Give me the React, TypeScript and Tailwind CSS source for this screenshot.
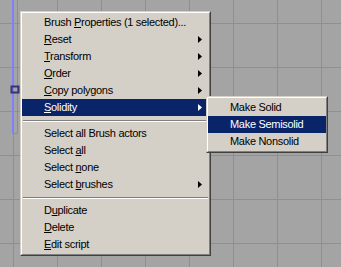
import React from 'react';

type Item =
    | { sep: true }
    | { sep?: false; label: string; key?: number; sub?: boolean; active?: boolean };

const mainItems: Item[] = [
    { label: 'Brush Properties (1 selected)...', key: 6 },
    { label: 'Reset', key: 0, sub: true },
    { label: 'Transform', key: 0, sub: true },
    { label: 'Order', key: 0, sub: true },
    { label: 'Copy polygons', key: 0, sub: true },
    { label: 'Solidity', key: 0, sub: true, active: true },
    { sep: true },
    { label: 'Select all Brush actors' },
    { label: 'Select all', key: 7 },
    { label: 'Select none', key: 7 },
    { label: 'Select brushes', key: 7, sub: true },
    { sep: true },
    { label: 'Duplicate', key: 1 },
    { label: 'Delete', key: 0 },
    { label: 'Edit script', key: 0 },
];

const subItems: Item[] = [
    { label: 'Make Solid' },
    { label: 'Make Semisolid', active: true },
    { label: 'Make Nonsolid' },
];

const Label: React.FC<{ text: string; k?: number }> = ({ text, k }) => {
    if (k === undefined) return <span>{text}</span>;
    return (
        <span>
            {text.slice(0, k)}
            <span className="underline underline-offset-[1px] decoration-1">{text[k]}</span>
            {text.slice(k + 1)}
        </span>
    );
};

const Arrow: React.FC<{ white?: boolean }> = ({ white }) => (
    <svg width="4" height="7" viewBox="0 0 4 7" className="absolute right-[7px] top-[5px]">
        <polygon points="0,0 4,3.5 0,7" fill={white ? '#ffffff' : '#000000'} />
    </svg>
);

// classic 3D popup frame
const Frame: React.FC<{ className: string; children: React.ReactNode }> = ({ className, children }) => (
    <div className={`absolute bg-[#d4d0c8] border border-t-[#d4d0c8] border-l-[#d4d0c8] border-r-[#404040] border-b-[#404040] ${className}`}>
        <div className="border border-t-white border-l-white border-r-[#808080] border-b-[#808080] h-full py-px">
            {children}
        </div>
    </div>
);

const Rows: React.FC<{ items: Item[] }> = ({ items }) => (
    <div className="flex flex-col">
        {items.map((it, i) =>
            it.sep ? (
                <div key={i} className="h-[9px] flex flex-col justify-center px-px">
                    <div className="h-px bg-[#808080]" />
                    <div className="h-px bg-white" />
                </div>
            ) : (
                <div
                    key={i}
                    className={`relative h-[17px] pl-[22px] leading-[17px] whitespace-nowrap ${
                        it.active ? 'bg-[#0a246a] text-white' : 'text-black'
                    }`}
                >
                    <Label text={it.label} k={it.key} />
                    {it.sub && <Arrow white={it.active} />}
                </div>
            )
        )}
    </div>
);

export default function App() {
    const vLines = [13, 57, 101, 145, 189, 233, 277, 321];
    const hLines = [23, 67, 111, 155, 199, 243];

    return (
        <div
            className="relative w-[341px] h-[267px] overflow-hidden bg-[#a4a4a4] text-[11px] tracking-[-0.3px]"
            style={{ fontFamily: '"Liberation Sans", Arial, sans-serif' }}
        >
            {/* viewport grid + selected brush */}
            <svg width="341" height="267" className="absolute inset-0">
                {vLines.map((x) => (
                    <line key={'v' + x} x1={x + 0.5} y1="0" x2={x + 0.5} y2="267" stroke="#8f8f8f" />
                ))}
                {hLines.map((y) => (
                    <line key={'h' + y} x1="0" y1={y + 0.5} x2="341" y2={y + 0.5} stroke="#8f8f8f" />
                ))}
                <path d="M12.5 0 V133.5 H17.5 V0" fill="none" stroke="#7f7fff" />
                <rect x="11.5" y="86.5" width="7" height="6" fill="none" stroke="#34347a" strokeWidth="2" />
            </svg>

            <Frame className="left-[20px] top-[11px] w-[191px] h-[245px]">
                <Rows items={mainItems} />
            </Frame>

            <Frame className="left-[206px] top-[96px] w-[122px] h-[57px]">
                <Rows items={subItems} />
            </Frame>
        </div>
    );
}
